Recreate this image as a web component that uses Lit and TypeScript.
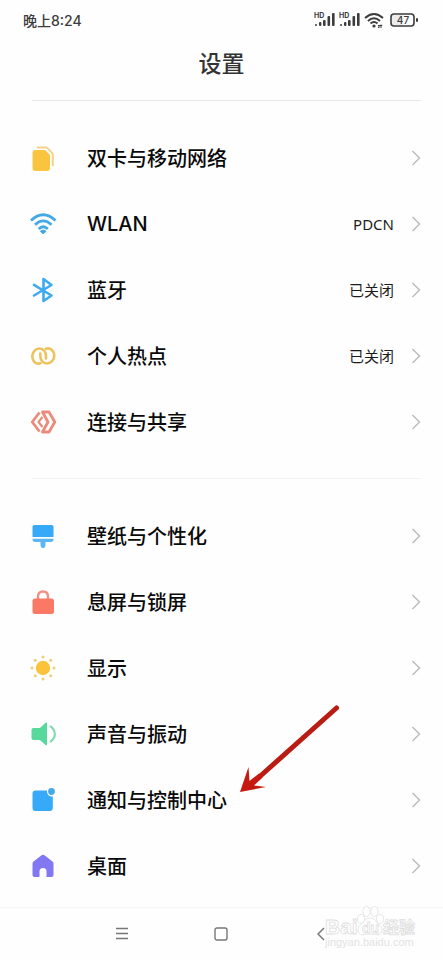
import { LitElement, html, css, svg, nothing } from "lit";
import { customElement, property } from "lit/decorators.js";
import { classMap } from "lit/directives/class-map.js";

interface Item {
  icon: string;
  label: string;
  value?: string;
  latin?: boolean;
  marked?: boolean;
}

const connectivity: Item[] = [
  { icon: "sim", label: "双卡与移动网络" },
  { icon: "wifi", label: "WLAN", value: "PDCN", latin: true },
  { icon: "bluetooth", label: "蓝牙", value: "已关闭" },
  { icon: "hotspot", label: "个人热点", value: "已关闭" },
  { icon: "share", label: "连接与共享" },
];

const device: Item[] = [
  { icon: "brush", label: "壁纸与个性化" },
  { icon: "lock", label: "息屏与锁屏" },
  { icon: "sun", label: "显示" },
  { icon: "sound", label: "声音与振动" },
  { icon: "notice", label: "通知与控制中心", marked: true },
  { icon: "home", label: "桌面" },
];

const rays = [0, 45, 90, 135, 180, 225, 270, 315].map((deg) => {
  const a = (deg * Math.PI) / 180;
  return svg`<circle cx=${12 + 11 * Math.cos(a)} cy=${12 + 11 * Math.sin(a)} r="1.5" fill="#f3cb7b"/>`;
});

const icons: Record<string, unknown> = {
  sim: svg`
    <path d="M6 1.6H14.5Q16 1.6 17 2.6L20.6 6.4Q21.8 7.6 21.8 9V20" fill="none" stroke="#f5d287" stroke-width="2"/>
    <path d="M4.500 4H14L19 9V22Q19 25 16 25H4.500Q1.500 25 1.500 22V7Q1.500 4 4.500 4Z" fill="#fac53e"/>`,
  wifi: svg`
    <g fill="none" stroke="#41a9e4" stroke-width="2.800">
      <path d="M0 8.500Q12.200 -3 24.500 8.500"/><path d="M4 12.800Q12.200 5 20.500 12.800"/><path d="M7.700 17Q12.200 12.500 16.800 17"/>
    </g><path d="M12.200 22L9.400 19.200Q12.200 17 15 19.200Z" fill="#41a9e4" stroke="#41a9e4"/>`,
  bluetooth: svg`
    <path d="M3 6.800L20.500 17.500L12.500 23V1L20.500 7L3 17.500" fill="none" stroke="#3eabee" stroke-width="2.600" stroke-linejoin="round" stroke-linecap="round"/>`,
  hotspot: svg`
    <g fill="none" stroke="#edc35c" stroke-width="2.600" stroke-linecap="round">
      <path d="M9.500 19.300C4.500 20.800 1.300 16.800 1.300 12.500C1.300 8 4.500 4.500 8.500 4.500C12.500 4.500 15 8 15 12V14.500"/>
      <path d="M14.800 4.700C19.800 3.200 23.300 7.200 23.300 11.500C23.300 16 19.800 19.500 15.800 19.500C11.800 19.500 9.300 16 9.300 12V9.500"/>
    </g>`,
  share: svg`
    <g fill="none" stroke="#ea8b7b" stroke-width="2.800" stroke-linejoin="round">
      <path d="M8.500 2.500L1.200 12L8.500 21.500"/>
      <path d="M11.500 2H18L23.800 12L18 22H11.500L17 12Z"/>
      <path d="M11.500 7L7.500 12L11.500 17" stroke-width="2.200"/>
    </g>`,
  brush: svg`
    <path d="M3.500 1H20.500Q22.500 1 22.500 3V13H1.500V3Q1.500 1 3.500 1Z" fill="#36a9f8"/>
    <path d="M1.500 14.800H22.500Q22.500 18 20 18H14.500V20.500Q14.500 24 12 24Q9.500 24 9.500 20.500V18H4Q1.500 18 1.500 14.800Z" fill="#5ab7f3"/>`,
  lock: svg`
    <path d="M7 11V6.500Q7 1.500 12 1.500T17 6.500V11" fill="none" stroke="#f28f82" stroke-width="2.400"/>
    <rect x="1.500" y="8.500" width="21.500" height="15.500" rx="2.500" fill="#fb7865"/>`,
  sun: svg`<circle cx="12" cy="12" r="7.200" fill="#fbc23c"/>${rays}`,
  sound: svg`
    <path d="M2.500 6H9L14.500 .8Q16 0 16 2V22Q16 24 14.500 23L9 18H2.500Q.500 18 .500 16V8Q.500 6 2.500 6Z" fill="#57d99d"/>
    <path d="M19 4C25.500 8.500 25.500 15.500 19 20" fill="none" stroke="#83dcb3" stroke-width="2.200"/>`,
  notice: svg`
    <path d="M4.500 2.500H16C15.500 6 18 9 21.800 8.500V20Q21.800 23 18.800 23H4.500Q1.500 23 1.500 20V5.500Q1.500 2.500 4.500 2.500Z" fill="#36a9f8"/>
    <circle cx="20.500" cy="3.500" r="3.400" fill="#46a9e8"/>`,
  home: svg`
    <path d="M10.500 1.200Q12 .2 13.500 1.200L21.500 7.500Q22.500 8.500 22.500 9.800V21Q22.500 23 20.500 23H15.500V17.500Q15.500 14 12 14T8.500 17.500V23H3.500Q1.500 23 1.500 21V9.800Q1.500 8.500 2.500 7.500Z" fill="#8279f2"/>`,
};

@customElement("status-bar")
class StatusBar extends LitElement {
  static styles = css`
    :host {
      display: flex;
      justify-content: space-between;
      align-items: center;
      height: 40px;
      padding: 0 25px 0 23px;
      color: #3c3c3c;
      font-family: "Inter", "Noto Sans CJK SC", sans-serif;
      font-size: 14px;
      font-weight: 500;
    }
    .icons {
      display: flex;
      align-items: center;
      gap: 4px;
    }
    .battery {
      margin-left: 2px;
    }
    svg {
      display: block;
    }
    .tiny {
      font: 700 7px "Inter", sans-serif;
    }
    .level {
      font: 500 10px "Inter", sans-serif;
    }
  `;

  private signal() {
    return html`<svg width="21" height="16" viewBox="0 0 21 16" fill="currentColor" aria-hidden="true">
      <text class="tiny" x="0" y="6">HD</text>
      <rect x="1" y="12" width="2" height="2" rx="1" />
      <rect x="5" y="10" width="2.400" height="4" rx="1" />
      <rect x="9" y="8" width="2.600" height="6" rx="1" />
      <rect x="13.500" y="4" width="2.600" height="10" rx="1" />
      <rect x="18" y="1" width="2.600" height="13" rx="1" />
    </svg>`;
  }

  render() {
    return html`
      <span>晚上8:24</span>
      <div class="icons">
        ${this.signal()}${this.signal()}
        <svg width="20" height="16" viewBox="0 0 20 16" aria-hidden="true">
          <g fill="none" stroke="currentColor" stroke-width="2">
            <path d="M1 6Q10 -2 19 6" /><path d="M4 9Q10 3.500 16 9" /><path d="M6.500 11.500Q10 8.500 13.500 11.500" />
          </g>
          <circle cx="10" cy="14" r="1.600" fill="currentColor" />
          <path d="M14 13.500H18L17 12.500M18 15H14L15 16" fill="none" stroke="currentColor" />
        </svg>
        <svg class="battery" width="28" height="14" viewBox="0 0 28 14" aria-hidden="true">
          <rect x="2" y="2" width="11" height="10" fill="#ececec" />
          <rect x="1" y="1" width="23" height="12" rx="3" fill="none" stroke="currentColor" stroke-width="1.600" />
          <rect x="26" y="5" width="2" height="4" rx="1" fill="currentColor" />
          <text class="level" x="13" y="11" text-anchor="middle" fill="currentColor">47</text>
        </svg>
      </div>
    `;
  }
}

@customElement("settings-group")
class SettingsGroup extends LitElement {
  @property({ attribute: false }) items: Item[] = [];

  static styles = css`
    :host {
      display: block;
    }
    ul {
      list-style: none;
      margin: 0;
      padding: 0;
    }
    li {
      position: relative;
    }
    .row {
      display: flex;
      align-items: center;
      height: 66px;
      padding: 0 22px 0 31px;
      color: #0a0a0a;
      text-decoration: none;
    }
    .icon {
      flex: none;
      width: 24px;
      height: 24px;
      margin-right: 32px;
      overflow: visible;
    }
    .label {
      flex: 1;
      font-size: 20px;
      font-weight: 500;
      line-height: 28px;
    }
    .value {
      font-size: 15px;
      line-height: 20px;
      color: #1c1c1c;
    }
    .latin .label {
      font-family: "Inter", sans-serif;
    }
    .latin .value {
      font-family: "Noto Sans", sans-serif;
    }
    .chevron {
      flex: none;
      margin-left: 17px;
    }
    .arrow {
      position: absolute;
      left: 239px;
      top: -64px;
      pointer-events: none;
    }
  `;

  render() {
    return html`<ul>
      ${this.items.map(
        (item) => html`<li>
          <a class=${classMap({ row: true, latin: !!item.latin })} href="#${item.icon}">
            <svg class="icon" viewBox="0 0 24 24" aria-hidden="true">${icons[item.icon]}</svg>
            <span class="label">${item.label}</span>
            ${item.value ? html`<span class="value">${item.value}</span>` : nothing}
            <svg class="chevron" width="10" height="16" viewBox="0 0 10 16" aria-hidden="true">
              <path d="M1.500 1L8.500 8L1.500 15" fill="none" stroke="#bdbdbd" stroke-width="1.500" />
            </svg>
          </a>
          ${item.marked
            ? html`<svg class="arrow" width="102" height="92" viewBox="0 0 102 92" aria-hidden="true">
                <path d="M97.500 5L18 76" stroke="#b91c12" stroke-width="5" stroke-linecap="round" />
                <path d="M1 89L9.500 64L10.500 78L20 70.500L23.500 74.500L15 82.500L27 84Z" fill="#c41a10" />
              </svg>`
            : nothing}
        </li>`
      )}
    </ul>`;
  }
}

@customElement("app-root")
class AppRoot extends LitElement {
  static styles = css`
    :host {
      display: block;
      position: relative;
      min-height: 100vh;
      background: #fefefe;
      font-family: "Noto Sans CJK SC", "Noto Sans", sans-serif;
    }
    h1 {
      margin: 0;
      padding: 6px 0 21px;
      text-align: center;
      font-size: 23px;
      font-weight: 500;
      line-height: 33px;
      color: #333;
    }
    .rule {
      height: 1px;
      margin: 0 22px 24px 32px;
      background: #e6e6e6;
    }
    .rule.light {
      margin-top: 23px;
      background: #f3f3f3;
    }
    .nav {
      display: grid;
      grid-template-columns: repeat(3, 1fr);
      height: 52px;
      margin-top: 8px;
      padding: 0 72px;
      border-top: 1px solid #f5f5f5;
    }
    .nav button {
      display: flex;
      align-items: center;
      justify-content: center;
      border: 0;
      padding: 0;
      background: none;
      color: #777;
    }
    .nav svg {
      display: block;
    }
    .mark {
      position: absolute;
      right: 28px;
      top: 904px;
      width: 90px;
      pointer-events: none;
      font-family: "Liberation Sans", "Noto Sans CJK SC", sans-serif;
    }
    .mark svg {
      display: block;
      overflow: visible;
    }
    .brand {
      font-size: 21px;
      font-weight: 700;
    }
    .inner {
      font-size: 14px;
      font-weight: 700;
    }
    .word {
      font-size: 16px;
      font-weight: 700;
    }
    .url {
      font-size: 11px;
    }
  `;

  render() {
    return html`
      <status-bar></status-bar>
      <header><h1>设置</h1></header>
      <div class="rule"></div>
      <main>
        <settings-group .items=${connectivity}></settings-group>
        <div class="rule light"></div>
        <settings-group .items=${device}></settings-group>
      </main>
      <nav class="nav">
        <button aria-label="菜单">
          <svg width="14" height="14" viewBox="0 0 14 14">
            <path d="M1 1.500H13M1 6.500H13M1 11.500H13" stroke="currentColor" stroke-width="1.300" />
          </svg>
        </button>
        <button aria-label="主页">
          <svg width="14" height="14" viewBox="0 0 14 14">
            <rect x="1" y="1" width="12" height="12" rx="2" fill="none" stroke="currentColor" stroke-width="1.400" />
          </svg>
        </button>
        <button aria-label="返回">
          <svg width="8" height="14" viewBox="0 0 8 14">
            <path d="M7 1L1 7L7 13" fill="none" stroke="currentColor" stroke-width="1.500" />
          </svg>
        </button>
      </nav>
      <div class="mark">
        <svg width="90" height="48" viewBox="0 0 90 48" fill="#fff" stroke="#dfdfdf" stroke-width=".8">
          <text class="brand" x="0" y="30">Bai</text>
          <ellipse cx="36" cy="15" rx="3.500" ry="4.500" />
          <ellipse cx="41.500" cy="7.500" rx="3.500" ry="5" />
          <ellipse cx="49.500" cy="7.500" rx="3.500" ry="5" />
          <ellipse cx="55" cy="15" rx="3.500" ry="4.500" />
          <path d="M45 14Q50 14 52 19Q58 23 57 27Q56 32 50 30.500Q45 29.500 41 30.500Q34 32 33 27Q32 23 38 19Q40 14 45 14Z" />
          <text class="inner" x="37" y="29">du</text>
          <text class="word" x="58" y="29">经验</text>
          <text class="url" x="0" y="42" fill="#e2e2e2" stroke="none">jingyan.baidu.com</text>
        </svg>
      </div>
    `;
  }
}
